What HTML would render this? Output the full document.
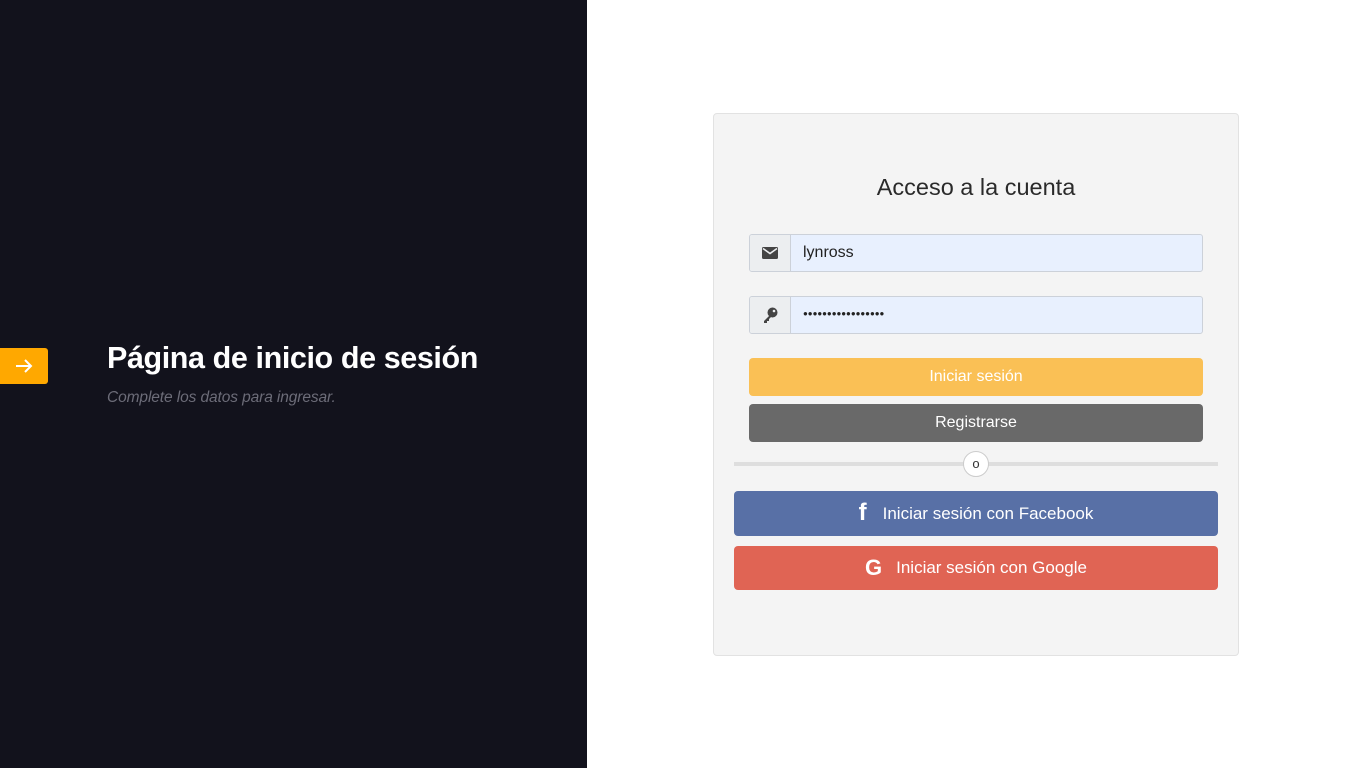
<!DOCTYPE html>
<html><head><meta charset="utf-8"><style>
*{box-sizing:border-box;margin:0;padding:0}
body{width:1366px;height:768px;position:relative;font-family:"Liberation Sans",sans-serif;background:#fff;overflow:hidden}
.left{position:absolute;left:0;top:0;width:587px;height:768px;background:#12121c}
.arrow{position:absolute;left:0;top:348px;width:48px;height:36px;background:#ffa800;border-radius:0 3px 3px 0;color:#fff}
.h1{position:absolute;left:107px;top:341px;color:#fff;font-size:30.5px;font-weight:bold;letter-spacing:-0.4px}
.sub{position:absolute;left:107px;top:389px;color:#6c6c78;font-style:italic;font-size:15.5px;letter-spacing:-0.1px}
.card{position:absolute;left:713px;top:113px;width:526px;height:543px;background:#f4f4f4;border:1px solid #e2e2e2;border-radius:4px}
.title{position:absolute;left:0;width:100%;top:60px;text-align:center;font-size:23.5px;color:#2a2a2a}
.inp{position:absolute;left:35px;width:454px;height:38px;border:1px solid #ccd1d9;border-radius:3px;background:#e8f0fe;overflow:hidden}
.inp .ic{position:absolute;left:0;top:0;width:41px;height:100%;background:#eceef0;border-right:1px solid #ccd1d9;display:flex;align-items:center;justify-content:center}
.inp .tx{position:absolute;left:53px;top:9px;font-size:16px;color:#222}
.btn{position:absolute;border-radius:4px;color:#fff;font-size:16px;display:flex;align-items:center;justify-content:center}
.line{position:absolute;left:20px;width:484px;top:348px;height:4px;background:#dedede}
.o{position:absolute;left:249px;top:337px;width:26px;height:26px;border-radius:50%;background:#fff;border:1px solid #ccc;font-size:13px;text-align:center;line-height:24px;color:#333}
</style></head><body>
<div class="left">
<div class="arrow"><svg width="48" height="36"><path d="M16 18h15M25 12l6 6-6 6" stroke="#fff" stroke-width="2" fill="none"/></svg></div>
<div class="h1">Página de inicio de sesión</div>
<div class="sub">Complete los datos para ingresar.</div>
</div>
<div class="card">
<div class="title">Acceso a la cuenta</div>
<div class="inp" style="top:120px"><div class="ic"><svg width="16" height="12"><rect x="0" y="0" width="16" height="12" rx="1.5" fill="#444"/><path d="M1 1.5l7 5 7-5" stroke="#eceef0" stroke-width="1.6" fill="none"/></svg></div><div class="tx">lynross</div></div>
<div class="inp" style="top:182px"><div class="ic"><svg width="16" height="16"><circle cx="10.5" cy="5.5" r="5" fill="#444"/><path d="M8 8L2 14v2h3v-2h2v-2l3-3z" fill="#444"/><circle cx="12" cy="4" r="1.3" fill="#eceef0"/></svg></div><div class="tx" style="top:12px;font-size:8px;letter-spacing:-0.05px">●●●●●●●●●●●●●●●●●</div></div>
<div class="btn" style="left:35px;top:244px;width:454px;height:38px;background:#fac055">Iniciar sesión</div>
<div class="btn" style="left:35px;top:290px;width:454px;height:38px;background:#696969">Registrarse</div>
<div class="line"></div><div class="o">o</div>
<div class="btn" style="left:20px;top:377px;width:484px;height:45px;background:#5870a6;font-size:17px"><span style="font-size:24px;font-weight:bold;margin-right:16px;margin-top:-2px">f</span>Iniciar sesión con Facebook</div>
<div class="btn" style="left:20px;top:432px;width:484px;height:44px;background:#e06454;font-size:17px"><span style="font-size:22px;font-weight:bold;margin-right:14px">G</span>Iniciar sesión con Google</div>
</div>
</body></html>
